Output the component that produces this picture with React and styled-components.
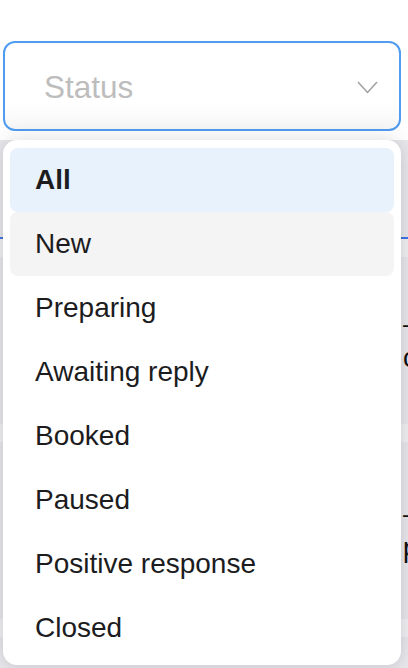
import React from 'react'
import styled, {createGlobalStyle} from 'styled-components'

const GlobalStyle = createGlobalStyle`
    body {
        margin: 0;
        background: #fff;
        font-family: "Liberation Sans", Arial, sans-serif;
    }
`

const STATUSES = [
    'All',
    'New',
    'Preparing',
    'Awaiting reply',
    'Booked',
    'Paused',
    'Positive response',
    'Closed',
]

const Page = styled.div`
    position: relative;
    height: 668px;
    overflow: hidden;
`

const Top = styled.div`
    padding: 41px 7px 9px 3px;
    background: #fff;
`

const Select = styled.div`
    height: 90px;
    box-sizing: border-box;
    border: 2px solid #4f9cf0;
    border-radius: 12px;
    background: linear-gradient(#fff 70%, #f7f7f8);
    display: flex;
    align-items: center;
    justify-content: space-between;
    padding: 2px 21px 0 39px;
`

const Placeholder = styled.span`
    font-size: 31.5px;
    color: #bdbdbd;
`

// table behind the open menu
const Table = styled.div`
    background: #e6e6eb;
    display: flex;
    flex-direction: column;
    height: 528px;
`

const TableHead = styled.div`
    height: 97px;
    border-bottom: 2px solid #3f74e6;
`

const Band = styled.div`
    height: 18px;
    background: #efeff2;
`

const Row = styled.div`
    height: ${({h}) => h}px;
    display: grid;
    grid-template-columns: 403px 1fr;
    align-content: center;
    font-size: 27px;
    color: #111;
    line-height: 34px;
    overflow: hidden;
`

const Cell = styled.div`
    white-space: nowrap;
`

const Menu = styled.ul`
    position: absolute;
    top: 140px;
    left: 3px;
    width: 398px;
    height: 525px;
    box-sizing: border-box;
    margin: 0;
    padding: 8px 7px;
    list-style: none;
    background: #fff;
    border-radius: 14px;
    box-shadow: 0 -6px 22px rgba(0, 0, 0, 0.07), 0 4px 14px rgba(0, 0, 0, 0.08);
`

const Option = styled.li`
    height: 64px;
    display: flex;
    align-items: center;
    padding-left: 25px;
    border-radius: 8px;
    font-size: 28px;
    color: #1c1c1e;
    font-weight: ${({selected}) => selected ? 700 : 400};
    background: ${({selected, hovered}) =>
        selected ? '#e8f2fd' : hovered ? '#f4f4f4' : 'transparent'};
`

function Chevron() {
    return (
        <svg width="21" height="13" viewBox="0 0 21 13" fill="none">
            <path d="M1 1 L10.5 11.5 L20 1" stroke="#a3a3a3" strokeWidth="1.6" strokeLinejoin="round" />
        </svg>
    )
}

export default function App() {
    return (
        <Page>
            <GlobalStyle />
            <Top>
                <Select>
                    <Placeholder>Status</Placeholder>
                    <Chevron />
                </Select>
            </Top>
            <Table>
                <TableHead />
                <Band />
                <Row h={167}>
                    <Cell />
                    <Cell>–<br/>c</Cell>
                </Row>
                <Band />
                <Row h={177}>
                    <Cell />
                    <Cell>–<br/>p</Cell>
                </Row>
                <Band />
            </Table>
            <Menu>
                {STATUSES.map((s, i) => (
                    <Option key={s} selected={i === 0} hovered={i === 1}>{s}</Option>
                ))}
            </Menu>
        </Page>
    )
}
